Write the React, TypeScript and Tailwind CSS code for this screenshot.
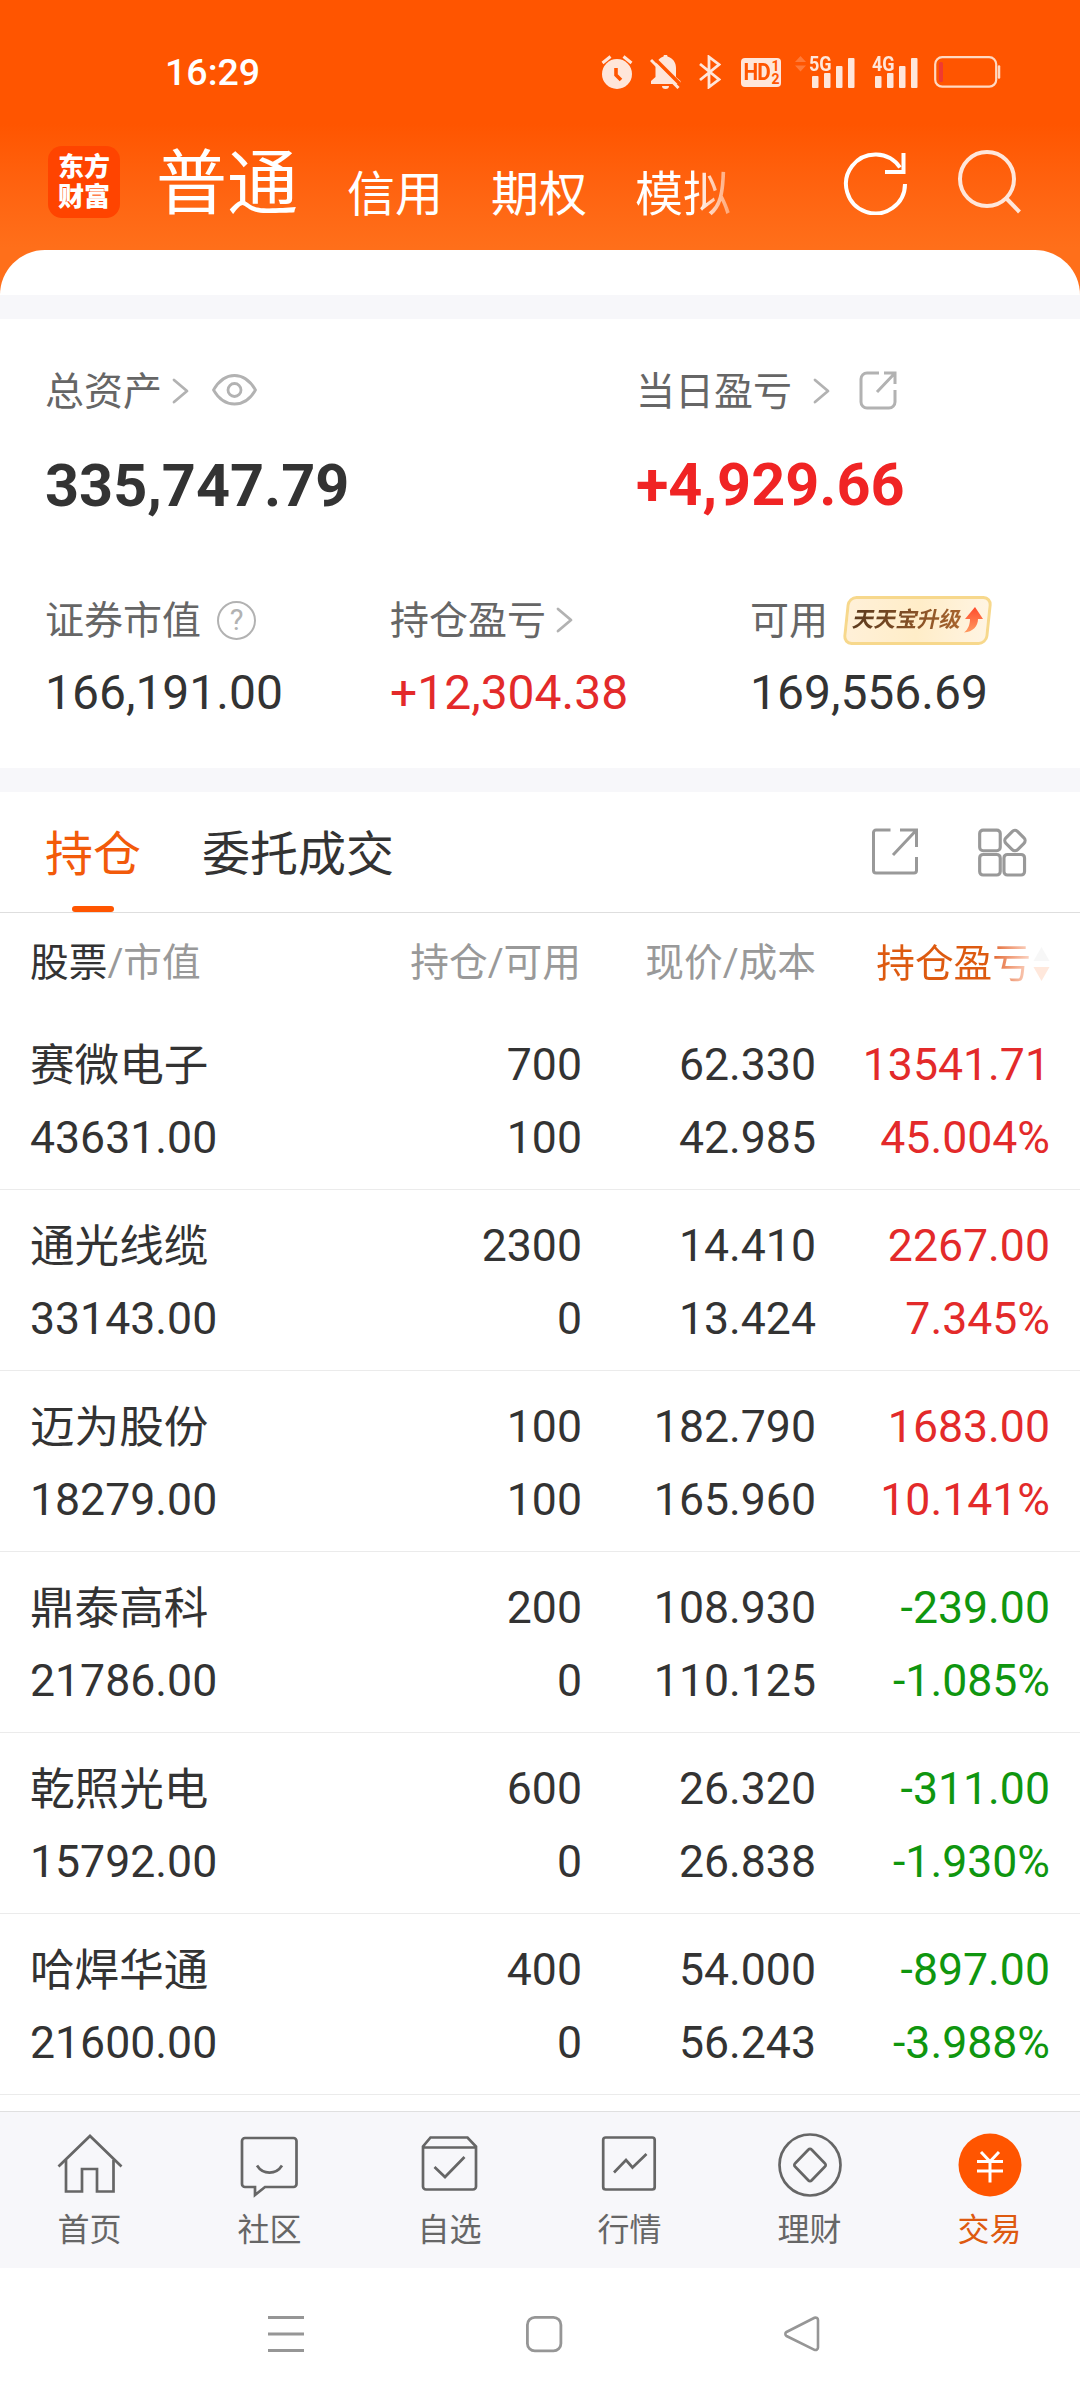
import type { ReactNode } from 'react';
import clsx from 'clsx';

type Holding = {
  name: string;
  value: string;
  position: string;
  available: string;
  price: string;
  cost: string;
  profit: string;
  rate: string;
};

const holdings: Holding[] = [
  { name: '赛微电子', value: '43631.00', position: '700', available: '100', price: '62.330', cost: '42.985', profit: '13541.71', rate: '45.004%' },
  { name: '通光线缆', value: '33143.00', position: '2300', available: '0', price: '14.410', cost: '13.424', profit: '2267.00', rate: '7.345%' },
  { name: '迈为股份', value: '18279.00', position: '100', available: '100', price: '182.790', cost: '165.960', profit: '1683.00', rate: '10.141%' },
  { name: '鼎泰高科', value: '21786.00', position: '200', available: '0', price: '108.930', cost: '110.125', profit: '-239.00', rate: '-1.085%' },
  { name: '乾照光电', value: '15792.00', position: '600', available: '0', price: '26.320', cost: '26.838', profit: '-311.00', rate: '-1.930%' },
  { name: '哈焊华通', value: '21600.00', position: '400', available: '0', price: '54.000', cost: '56.243', profit: '-897.00', rate: '-3.988%' },
];

function Chevron({ className }: { className?: string }) {
  return (
    <svg className={clsx('h-[26px] w-[17px] shrink-0', className)} viewBox="0 0 17 26" fill="none" stroke="#b2b2b2" strokeWidth="2.8" strokeLinecap="round" strokeLinejoin="round">
      <path d="M2 2l13 11L2 24" />
    </svg>
  );
}

function SignalBars() {
  return (
    <svg className="absolute bottom-0 left-[3px] h-[30px] w-[43px]" viewBox="0 0 43 30" fill="#ffe6da">
      <rect x="0" y="18" width="6.5" height="12" rx="1" />
      <rect x="12" y="15" width="6.5" height="15" rx="1" />
      <rect x="24" y="8" width="6.5" height="22" rx="1" />
      <rect x="36" y="0" width="6.5" height="30" rx="1" />
    </svg>
  );
}

function Signal({ label, className }: { label: string; className?: string }) {
  return (
    <div className={clsx('relative h-[32px] w-[46px]', className)}>
      <SignalBars />
      <span className="absolute top-0 left-0 origin-left scale-x-90 text-[20px] leading-[16px] font-bold text-[#ffe6da]">{label}</span>
    </div>
  );
}

function StatusBar() {
  return (
    <div className="flex h-[144px] items-center pr-[79px] pl-[165px] text-[#ffe6da]">
      <span className="mt-[2px] flex-1 text-[37.500px] leading-none font-medium text-white">16:29</span>
      <svg className="h-[34px] w-[32px]" viewBox="0 0 32 34">
        <circle cx="16" cy="19" r="15" fill="#ffe6da" />
        <path d="M1.500 8l8-6.500M30.500 8l-8-6.500" stroke="#ffe6da" strokeWidth="3" />
        <path d="M15 13v7l5 5" fill="none" stroke="#ff5500" strokeWidth="3.600" />
      </svg>
      <svg className="ml-[17px] h-[34px] w-[31px]" viewBox="0 0 31 34">
        <path d="M13.500 1.500a2 2 0 0 1 4 0C23 3.200 26 7.500 26 13v9l4.500 4v3H1v-3l4.500-4v-9c0-5.500 3-9.800 8-11.500z" fill="#ffe6da" />
        <path d="M12 31h7a3.500 3 0 0 1-7 0z" fill="#ffe6da" />
        <path d="M4 3l27 27" stroke="#ff5500" strokeWidth="3.600" />
        <path d="M1 5l27.500 28" stroke="#ffe6da" strokeWidth="3" />
      </svg>
      <svg className="ml-[18px] h-[34px] w-[22px]" viewBox="0 0 22 34" fill="none" stroke="#ffe6da" strokeWidth="2.800">
        <path d="M1 9l19 15.500-10 7.500V2l10 7.500L1 25" />
      </svg>
      <div className="ml-[20px] flex h-[29px] w-[40px] justify-center rounded-[4px] bg-[#ffe6da] text-[#ff5500]">
        <span className="origin-center scale-x-90 text-[23px] leading-[29px] font-bold tracking-[-1px]">HD</span>
        <span className="flex flex-col pt-[2px] text-[14px] leading-[13px] font-bold">
          <span>1</span>
          <span>2</span>
        </span>
      </div>
      <svg className="mt-[-16px] ml-[14px] h-[16px] w-[11px]" viewBox="0 0 11 16" fill="#ff7a38">
        <path d="M0 6l5.500-6L11 6zM0 9.500l5.500 6 5.500-6z" />
      </svg>
      <Signal label="5G" className="ml-[3px]" />
      <Signal label="4G" className="ml-[17px]" />
      <svg className="ml-[16px] h-[32px] w-[67px]" viewBox="0 0 67 32" fill="none">
        <rect x="1.200" y="1.200" width="61" height="29.500" rx="7" stroke="#ffd9c2" strokeWidth="2.200" />
        <rect x="5" y="6" width="4" height="20" rx="1.500" fill="#f03a30" />
        <path d="M65 10.500v11" stroke="#ffd9c2" strokeWidth="2.500" strokeLinecap="round" />
      </svg>
    </div>
  );
}

function Header() {
  return (
    <header className="h-[295px] bg-linear-to-b from-[#ff5500] from-[42%] to-[#ff6f1a] to-[84%]">
      <StatusBar />
      <div className="flex h-[106px] pl-[48px] text-white">
        <div className="mt-[2px] flex h-[72px] w-[72px] flex-col items-center justify-center rounded-[14px] bg-[#ff4400] text-[26px] leading-[30px] font-black">
          <span>东方</span>
          <span>财富</span>
        </div>
        <span className="mt-[3px] ml-[36px] text-[71px] leading-[74px]">普通</span>
        <nav className="ml-[49px] flex w-[402px] gap-[48px] pt-[20px] text-[48px] leading-[62px]">
          <span>信用</span>
          <span>期权</span>
          <span className="bg-linear-to-r from-white from-[62%] to-white/40 bg-clip-text text-transparent">模拟</span>
        </nav>
        <svg className="mt-[5px] ml-[94px] h-[66px] w-[66px] shrink-0" viewBox="0 0 66 66" fill="none" stroke="#fff" strokeWidth="4">
          <path d="M62 35A29.500 29.500 0 1 1 57 18.500" />
          <path d="M60.500 4v19H42" />
        </svg>
        <svg className="mt-[5px] ml-[48px] h-[66px] w-[66px] shrink-0" viewBox="0 0 66 66" fill="none" stroke="#ffe6da" strokeWidth="4">
          <circle cx="30" cy="30" r="27" />
          <path d="M49 49l13.500 14" />
        </svg>
      </div>
      <div className="h-[45px] rounded-t-[48px] bg-white" />
    </header>
  );
}

function Metric({ label, value, extra, className, valueClass }: { label: string; value: string; extra?: ReactNode; className?: string; valueClass?: string }) {
  return (
    <div className={className}>
      <div className="flex h-[48px] items-center text-[39px] leading-[48px] whitespace-nowrap text-[#666]">
        <span className="mt-[2px]">{label}</span>
        {extra}
      </div>
      <div className={valueClass}>{value}</div>
    </div>
  );
}

function Summary() {
  return (
    <section className="h-[449px] bg-white pt-[48px] pl-[45px]">
      <div className="flex">
        <Metric
          label="总资产"
          value="335,747.79"
          className="w-[591px]"
          valueClass="mt-[35px] text-[59.400px] leading-[72px] font-bold text-[#333]"
          extra={
            <>
              <Chevron className="ml-[10px]" />
              <svg className="mt-[-2px] ml-[23px] h-[32px] w-[45px]" viewBox="0 0 45 32" fill="none" stroke="#b2b2b2" strokeWidth="2.800">
                <path d="M1.500 16C7 6.500 14 1.500 22.500 1.500S38 6.500 43.500 16C38 25.500 31 30 22.500 30S7 25.500 1.500 16z" strokeLinejoin="round" />
                <circle cx="22.500" cy="16" r="6.500" />
              </svg>
            </>
          }
        />
        <Metric
          label="当日盈亏"
          value="+4,929.66"
          valueClass="mt-[34px] text-[59.400px] leading-[72px] font-bold text-[#f02424]"
          extra={
            <>
              <Chevron className="mt-[-1px] ml-[21px]" />
              <svg className="mt-[-2px] ml-[29px] h-[39px] w-[38px]" viewBox="0 0 38 39" fill="none" stroke="#b2b2b2" strokeWidth="3">
                <path d="M20 2H8a6 6 0 0 0-6 6v23a6 6 0 0 0 6 6h22a6 6 0 0 0 6-6V19" />
                <path d="M25 2h11v11M36 2L18 21" />
              </svg>
            </>
          }
        />
      </div>
      <div className="mt-[74px] flex">
        <Metric
          label="证券市值"
          value="166,191.00"
          className="w-[345px]"
          valueClass="mt-[21px] text-[48px] leading-[56px] text-[#333]"
          extra={
            <span className="ml-[16px] flex h-[39px] w-[39px] items-center justify-center rounded-full border-[2.500px] border-[#b2b2b2] text-[29px] leading-none text-[#b2b2b2]">?</span>
          }
        />
        <Metric
          label="持仓盈亏"
          value="+12,304.38"
          className="w-[360px]"
          valueClass="mt-[21px] text-[48px] leading-[56px] text-[#e32a2a]"
          extra={<Chevron className="ml-[10px]" />}
        />
        <Metric
          label="可用"
          value="169,556.69"
          valueClass="mt-[21px] text-[48px] leading-[56px] text-[#333]"
          extra={
            <span className="relative ml-[14px] flex h-[49px] w-[151px] items-center">
              <span className="absolute inset-x-[3px] inset-y-0 -skew-x-6 rounded-[9px] border-[3px] border-[#f7d88c] bg-linear-to-r from-[#fff0d8] via-[#ffedc8] to-[#fff4e2]" />
              <span className="relative ml-[11px] -skew-x-12 bg-linear-to-r from-[#5c3a1e] to-[#a8642c] bg-clip-text text-[21.700px] font-bold text-transparent">天天宝升级</span>
              <svg className="relative ml-[3px] h-[26px] w-[19px]" viewBox="0 0 19 26">
                <defs>
                  <linearGradient id="up" x1="0" y1="0" x2="0" y2="1">
                    <stop offset="0" stopColor="#ff4a2c" />
                    <stop offset="1" stopColor="#ff9a60" />
                  </linearGradient>
                </defs>
                <path d="M11 0l8 12h-5c0 7-5 13-14 13.500 4-3 6-8 6-13.500H1z" fill="url(#up)" />
              </svg>
            </span>
          }
        />
      </div>
    </section>
  );
}

function Tabs() {
  return (
    <div className="flex h-[121px] items-start border-b border-[#dedede] bg-white pl-[45px]">
      <div className="flex h-[120px] flex-col items-center text-[48px] text-[#f25a0a]">
        <span className="mt-[32px] h-[82px] leading-[62px]">持仓</span>
        <span className="h-[6px] w-[42px] rounded-full bg-[#ff5500]" />
      </div>
      <span className="mt-[32px] ml-[61px] flex-1 text-[48px] leading-[62px] text-[#333]">委托成交</span>
      <svg className="mt-[35px] h-[48px] w-[48px]" viewBox="0 0 48 48" fill="none" stroke="#999" strokeWidth="3">
        <path d="M19.500 3H5a2.500 2.500 0 0 0-2.500 2.500v38A2.500 2.500 0 0 0 5 46h38a2.500 2.500 0 0 0 2.500-2.500V30" />
        <path d="M29 3h16.500v17M45.500 3L22 28" />
      </svg>
      <svg className="mt-[36px] mr-[53px] ml-[59px] h-[50px] w-[49px]" viewBox="0 0 50 50" fill="none" stroke="#999" strokeWidth="3.200">
        <rect x="1.700" y="1.700" width="21" height="21" rx="3.500" />
        <rect x="1.700" y="26.500" width="21" height="21" rx="3.500" />
        <rect x="26.500" y="26.500" width="21" height="21" rx="3.500" />
        <rect x="29.200" y="3.800" width="17" height="17" rx="4" transform="rotate(45 37.700 12.300)" />
      </svg>
    </div>
  );
}

function HoldingsHeader() {
  return (
    <div className="flex h-[96px] items-center bg-white pt-[5px] pr-[30px] pl-[30px] text-[38.700px] leading-none whitespace-nowrap text-[#999]">
      <span className="w-[249px]">
        <span className="text-[#333]">股票</span>/市值
      </span>
      <span className="w-[302px] text-right">持仓/可用</span>
      <span className="w-[235px] text-right">现价/成本</span>
      <span className="flex flex-1 items-center justify-end">
        <span className="bg-linear-to-r from-[#dd5a10] from-[73%] to-[#fbd8c8] bg-clip-text leading-[48px] text-transparent">持仓盈亏</span>
        <svg className="ml-[2px] h-[34px] w-[17px]" viewBox="0 0 17 34">
          <path d="M8.500 0l8 14H.500z" fill="#f7f7f7" />
          <path d="M8.500 34l8-14H.500z" fill="#ffe8dc" />
        </svg>
      </span>
    </div>
  );
}

function HoldingRow({ item }: { item: Holding }) {
  const down = item.profit.startsWith('-');

  return (
    <div className="flex h-[181px] border-b border-[#ebebeb] bg-white pt-[20px] pr-[30px] pl-[30px] text-[44.600px] leading-[73px] whitespace-nowrap text-[#333]">
      <div className="w-[249px]">
        <div className="h-[73px] pt-px text-[44.600px]">{item.name}</div>
        <div>{item.value}</div>
      </div>
      <div className="w-[303px] text-right">
        <div>{item.position}</div>
        <div>{item.available}</div>
      </div>
      <div className="w-[234px] text-right">
        <div>{item.price}</div>
        <div>{item.cost}</div>
      </div>
      <div className={clsx('flex-1 text-right', down ? 'text-[#0f960f]' : 'text-[#e32a2a]')}>
        <div>{item.profit}</div>
        <div>{item.rate}</div>
      </div>
    </div>
  );
}

const navItems: { label: string; active?: boolean; icon: ReactNode }[] = [
  {
    label: '首页',
    icon: (
      <>
        <path d="M1.500 33.500L33 3l31.500 30.500" />
        <path d="M9 27v31.500h16V36h15v22.500h16.500V27" />
      </>
    ),
  },
  {
    label: '社区',
    icon: (
      <>
        <path d="M8 5h48.500a3 3 0 0 1 3 3v43a3 3 0 0 1-3 3H28l-10 8v-8H8a3 3 0 0 1-3-3V8a3 3 0 0 1 3-3z" />
        <path d="M20 32.500c6 9.500 19 9.500 25 0" />
      </>
    ),
  },
  {
    label: '自选',
    icon: (
      <>
        <path d="M13.500 4.500h37l8.500 9v40a3 3 0 0 1-3 3H9a3 3 0 0 1-3-3v-40zM6 14.500h53" />
        <path d="M17.500 34L28 44l19.500-20" />
      </>
    ),
  },
  {
    label: '行情',
    icon: (
      <>
        <rect x="6.200" y="4.500" width="51.500" height="52" rx="2.500" />
        <path d="M17 39.500l12-12.500 6.500 7.500L49.500 21" />
      </>
    ),
  },
  {
    label: '理财',
    icon: (
      <>
        <circle cx="33" cy="32" r="30.500" />
        <path d="M34.500 16.500L48 30.500a2 2 0 0 1 0 3L34.500 47.500a2 2 0 0 1-3 0L18 33.500a2 2 0 0 1 0-3l13.500-14a2 2 0 0 1 3 0z" />
      </>
    ),
  },
  {
    label: '交易',
    active: true,
    icon: (
      <>
        <circle cx="33" cy="32" r="31.500" fill="#ff5500" stroke="none" />
        <path d="M24 19l9 9.500 9-9.500M20 28.500h26M20 38h26M33 28.500v21" stroke="#fff" strokeWidth="3" />
      </>
    ),
  },
];

function BottomNav() {
  return (
    <nav className="grid h-[157px] grid-cols-6 border-t border-[#e0e0e0] bg-[#f7f7fa]">
      {navItems.map((item) => (
        <div key={item.label} className={clsx('flex flex-col items-center pt-[21px] pr-px text-[32px] leading-[40px]', item.active ? 'text-[#de5a10]' : 'text-[#666]')}>
          <svg className="h-[66px] w-[66px]" viewBox="0 0 66 66" fill="none" stroke="#666" strokeWidth="2.700">
            {item.icon}
          </svg>
          <span className="mt-[11px]">{item.label}</span>
        </div>
      ))}
    </nav>
  );
}

function SystemNav() {
  return (
    <div className="flex h-[132px] items-center justify-between bg-white pr-[259px] pl-[267px]">
      <svg className="h-[38px] w-[38px]" viewBox="0 0 38 38" stroke="#969696" strokeWidth="3">
        <path d="M1 2.500h36M1 19h36M1 35.500h36" />
      </svg>
      <svg className="h-[38px] w-[38px]" viewBox="0 0 38 38" fill="none" stroke="#969696" strokeWidth="2.800">
        <rect x="2.400" y="2.400" width="33.500" height="33.500" rx="7.500" />
      </svg>
      <svg className="h-[38px] w-[38px]" viewBox="0 0 38 38" fill="none" stroke="#969696" strokeWidth="2.600">
        <path d="M3.500 17L31.500 2.800a2.500 2.500 0 0 1 3.500 2.200v27.500a2.500 2.500 0 0 1-3.500 2.300L3.500 21a2.300 2.300 0 0 1 0-4z" />
      </svg>
    </div>
  );
}

export default function App() {
  return (
    <div className="flex h-[2400px] w-[1080px] flex-col overflow-hidden bg-[#f7f7fa] font-[Roboto,'Noto_Sans_CJK_SC',sans-serif]">
      <Header />
      <div className="h-[24px] shrink-0" />
      <Summary />
      <div className="h-[24px] shrink-0" />
      <Tabs />
      <HoldingsHeader />
      <div className="flex-1 bg-white">
        {holdings.map((item) => (
          <HoldingRow key={item.name} item={item} />
        ))}
      </div>
      <BottomNav />
      <SystemNav />
    </div>
  );
}
